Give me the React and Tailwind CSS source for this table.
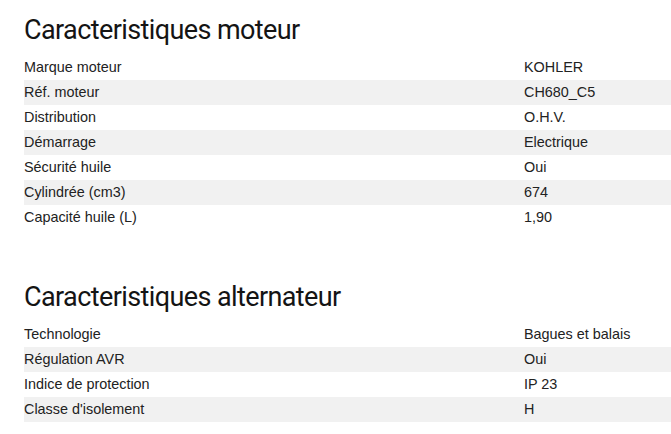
const moteur = [
  ["Marque moteur", "KOHLER"],
  ["Réf. moteur", "CH680_C5"],
  ["Distribution", "O.H.V."],
  ["Démarrage", "Electrique"],
  ["Sécurité huile", "Oui"],
  ["Cylindrée (cm3)", "674"],
  ["Capacité huile (L)", "1,90"],
];

const alternateur = [
  ["Technologie", "Bagues et balais"],
  ["Régulation AVR", "Oui"],
  ["Indice de protection", "IP 23"],
  ["Classe d'isolement", "H"],
];

function SpecTable({ title, rows }) {
  return (
    <section>
      <h2 className="text-[27px] leading-[30px] font-[450] text-[#141414] font-['Roboto',sans-serif] tracking-[-0.6px] mb-[10px]">
        {title}
      </h2>
      <div>
        {rows.map(([label, value], i) => (
          <div
            key={label}
            className={`flex items-center h-[25px] text-[14.4px] text-[#222] ${i % 2 === 1 ? "bg-[#f1f1f1]" : "bg-white"}`}
          >
            <div className="w-[500px] shrink-0">{label}</div>
            <div>{value}</div>
          </div>
        ))}
      </div>
    </section>
  );
}

export default function App() {
  return (
    <div className="w-[671px] h-[434px] bg-white pl-[24px] pt-[15px] overflow-hidden font-['Liberation_Sans',Arial,sans-serif]">
      <SpecTable title="Caracteristiques moteur" rows={moteur} />
      <div className="h-[52px]" />
      <SpecTable title="Caracteristiques alternateur" rows={alternateur} />
    </div>
  );
}
